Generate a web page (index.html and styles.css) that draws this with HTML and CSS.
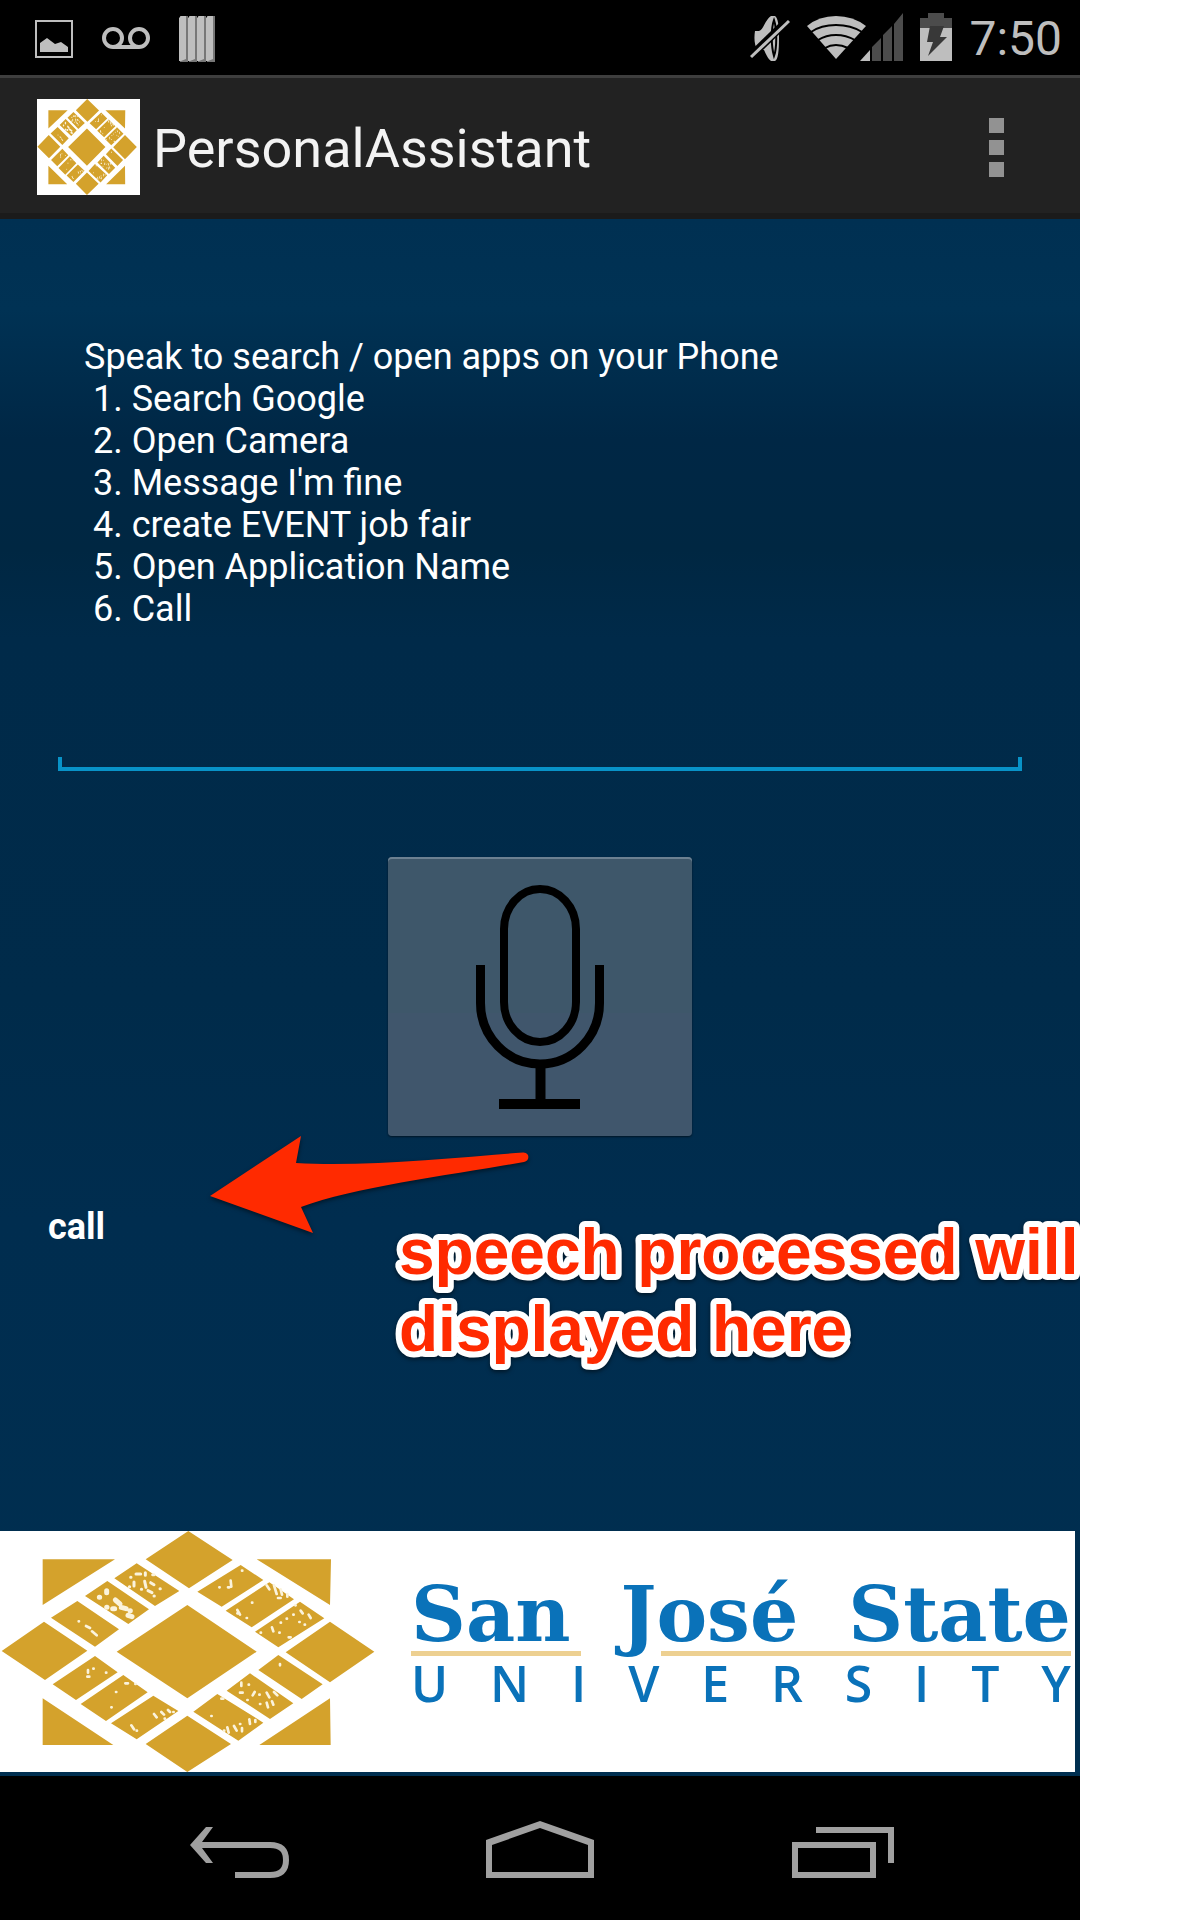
FILE: index.html
```html
<!DOCTYPE html>
<html lang="en">
<head>
<meta charset="utf-8">
<meta name="viewport" content="width=device-width, initial-scale=1">
<title>PersonalAssistant</title>
<link rel="stylesheet" href="styles.css">
</head>
<body>
<svg class="sprite" aria-hidden="true">
  <symbol id="emblem" viewBox="0 33 1125 723" preserveAspectRatio="none">
    <path fill="#d4a22c" d="M562 255 770 395 562 535 350 395ZM565 33 698 120 567 205 437 118ZM562 756 693 672 562 587 437 672ZM5 393 132 305 262 392 135 480ZM1123 395 990 305 857 397 990 487ZM128 118H345L128 255ZM770 118H993L990 255ZM128 535 340 675H128ZM990 535 992 675H778Z"/>
    <path fill="#d4a22c" d="M410 130 538 213 465 258 343 175ZM322 183 447 268 385 312 255 228ZM232 243 357 328 285 380 153 293ZM722 135 790 180 665 260 592 215ZM808 187 882 238 755 322 677 272ZM900 245 973 295 835 382 765 335ZM285 408 353 457 228 540 158 493ZM370 465 443 517 318 603 242 552ZM460 527 535 573 410 658 333 610ZM835 405 968 493 905 537 775 450ZM750 460 880 550 810 597 680 512ZM652 522 790 608 715 662 580 575Z"/>
    <path fill="none" stroke="#fbf3dc" stroke-width="9" stroke-linecap="round" d="M392 172h1M408 162h14M436 158v8M458 164h4M402 186v12M388 200h1M434 184l4 18M452 188l10 6M444 212l12 6M480 206h1M462 228h1M424 208h1"/>
    <path fill="none" stroke="#fbf3dc" stroke-width="15" stroke-linecap="round" d="M320 212v6M298 232h1M346 240l14 12M364 262l14 4M338 266h6M384 286l12 4M320 262h1M390 272h1"/>
    <path fill="none" stroke="#fbf3dc" stroke-width="8" stroke-linecap="round" d="M236 304h1M258 318l12 6M276 334l14 12M726 152h1M692 182l2 18M684 202h4M658 202h1M712 270l8 14M740 294h1M756 248h1M800 196l8 12M822 196l8 26M842 208l4 16M862 222v8M834 234h8M712 280h6M886 256h1M902 272l6 8M926 284l6 10M880 284h1M898 306h1M860 296h1M914 314h1M816 322l4 12M838 338h1M866 352h6M842 308h1M782 338h1"/>
    <path fill="none" stroke="#fbf3dc" stroke-width="8" stroke-linecap="round" d="M264 450v8M280 446h1M262 470h6M318 458h1M376 490h8M406 492h1M348 516h1M334 562h1M394 616l8 12M410 632h1M462 582l8 10M484 576l8 8M504 570l6 6M520 576h1M494 596h1M840 432v4M724 488v10M746 494h1M720 518h8M758 526l6-10M778 524h1M800 518l8 14M822 516l10 10M816 544l4 10M800 548l4 14M780 552h1M742 540h1M664 536h6M634 588h1M682 622l4 16M702 618l8 14M726 624v10M748 598l2 14M766 600v6M672 632h1M720 612h1"/>
  </symbol>
</svg>

<div class="phone">
  <div class="status-bar">
    <div class="status-group">
      <svg class="i-picture" viewBox="35 12 38 50" aria-hidden="true"><path fill="none" stroke="#bebebe" stroke-width="2" d="M36 20H72V56H36Z"/><path fill="#bebebe" d="M40 51V42L47 37 55 43 61 41 68 46V51Z"/></svg>
      <svg class="i-voicemail" viewBox="102 12 48 50" aria-hidden="true"><g fill="none" stroke="#bebebe" stroke-width="4"><circle cx="113" cy="37" r="9"/><circle cx="139" cy="37" r="9"/><path d="M113 46H139"/></g></svg>
      <svg class="i-stripes" viewBox="180 12 36 50" aria-hidden="true"><path fill="#777" d="M181 15h8v46h-8zM190 15h8v46h-8zM199 15h8v46h-8zM208 15h8v46h-8z"/><path fill="#bebebe" d="M182 15h5v43l-5 2h-2V17zM191 15h5v43l-5 2h-2V17zM200 15h5v43l-5 2h-2V17zM209 15h5v43l-5 2h-2V17z"/></svg>
    </div>
    <div class="status-group status-right">
      <svg class="i-mute" viewBox="746 12 40 50" aria-hidden="true"><path fill="#bebebe" d="M751 30h4c5-2 6-11 12-15h4c3 2 4 9 4 22s-1 22-4 23h-4c-3-2-5-7-7-11h-6c-4-4-4-13-3-19Z"/><path fill="none" stroke="#000" stroke-width="2" d="M770 19c-3 8-3 26 0 36 3-8 3-27 0-36Z"/><path stroke="#000" stroke-width="8" d="M746 56 784 19"/><path stroke="#bebebe" stroke-width="3" d="M747 56 785 20"/></svg>
      <svg class="i-network" viewBox="807 12 96 50" aria-hidden="true"><path fill="#bebebe" d="M836 58 807 25Q819 15 836 15T866 25Z"/><g fill="none" stroke="#000" stroke-width="2"><path d="M811 31Q821 24 836 24T862 31M818 39Q826 34 836 34T855 39M825 47Q830 44 836 44T848 47"/></g><path fill="#4c4c4c" d="M872 46 881 37V60H872ZM883 34 892 25V60H883ZM894 23 903 12V60H894Z"/><path fill="#bebebe" d="M860 60 870 49V60Z"/></svg>
      <svg class="i-battery" viewBox="919 12 32 50" aria-hidden="true"><path fill="#4c4c4c" d="M927 12h16v5h8v11h-32V17h8z"/><path fill="#bebebe" d="M919 27h32v33h-32z"/><path fill="#383838" d="M929 25h14l-4 11h7l-19 19 5-14h-6Z"/></svg>
      <time class="clock">7:50</time>
    </div>
  </div>

  <header class="action-bar">
    <span class="app-icon"><svg aria-hidden="true"><use href="#emblem"/></svg></span>
    <h1 class="app-title">PersonalAssistant</h1>
    <button class="overflow" type="button" aria-label="More options"><i></i><i></i><i></i></button>
  </header>

  <main class="screen">
    <section class="help">
      <p>Speak to search / open apps on your Phone</p>
      <ol>
        <li>1. Search Google</li>
        <li>2. Open Camera</li>
        <li>3. Message I'm fine</li>
        <li>4. create EVENT job fair</li>
        <li>5. Open Application Name</li>
        <li>6. Call</li>
      </ol>
    </section>

    <input class="query" type="text" aria-label="Query">

    <button class="mic" type="button" aria-label="Speak">
      <svg viewBox="0 0 304 279" aria-hidden="true"><g fill="none" stroke="#000"><rect x="116" y="32" width="72" height="153" rx="36" ry="40" stroke-width="8"/><path stroke-width="9" d="M92.500 108V146A59.500 61 0 0 0 211.500 146V108"/><path stroke-width="10" d="M152.500 207V247M111 247H192"/></g></svg>
    </button>

    <div class="result">
      <output>call</output>
      <svg class="arrow" viewBox="200 1126 340 120" aria-hidden="true"><path fill="#ff2a00" d="M210 1196 301 1136 296 1163C365 1167 450 1158 523 1152.500C530 1152 530 1161 524 1162C450 1175 355 1187 301 1207L313 1233Z"/></svg>
      <svg class="caption" viewBox="0 0 690 170"><text><tspan x="8" y="61">speech processed will</tspan><tspan x="8" y="138">displayed here</tspan></text></svg>
    </div>

    <div class="banner">
      <svg class="banner-emblem" aria-hidden="true"><use href="#emblem"/></svg>
      <div class="wordmark">
        <div class="wordmark-name"><span>San</span> <span>José</span> <span>State</span></div>
        <div class="wordmark-rule"><i></i><i></i></div>
        <div class="wordmark-sub"><span>U</span><span>N</span><span>I</span><span>V</span><span>E</span><span>R</span><span>S</span><span>I</span><span>T</span><span>Y</span></div>
      </div>
    </div>
  </main>

  <nav class="nav-bar">
    <button type="button" aria-label="Back"><svg viewBox="186 1818 108 60" aria-hidden="true"><path fill="#a0a0a0" d="M190 1845 206 1827H213L202 1842V1848L213 1863H206Z"/><path fill="none" stroke="#a0a0a0" stroke-width="6" d="M198 1845H270C281 1845 286 1850 286 1860S281 1875 270 1875H235"/></svg></button>
    <button type="button" aria-label="Home"><svg viewBox="486 1818 108 60" aria-hidden="true"><path fill="#a0a0a0" fill-rule="evenodd" d="M540 1821 594 1840V1878H486V1840ZM540 1828 492 1845V1872H588V1845Z"/></svg></button>
    <button type="button" aria-label="Recent apps"><svg viewBox="786 1818 108 60" aria-hidden="true"><path fill="none" stroke="#a0a0a0" stroke-width="6" d="M795 1845H873V1875H795ZM816 1830H891V1863"/></svg></button>
  </nav>
</div>
</body>
</html>
```
FILE: styles.css
```css
* { box-sizing: border-box; }

body {
  margin: 0;
  background: #fff;
  font-family: Roboto, "Liberation Sans", sans-serif;
}

h1, p, ol { margin: 0; padding: 0; }

button {
  border: 0;
  padding: 0;
  background: none;
  font: inherit;
}

svg { display: block; }

.sprite {
  position: absolute;
  width: 0;
  height: 0;
}

.phone {
  display: flex;
  flex-direction: column;
  max-width: 1080px;
  min-height: 100vh;
  background: #000;
}

/* System status bar */
.status-bar {
  display: flex;
  align-items: center;
  justify-content: space-between;
  height: 75px;
  padding: 0 18px 0 35px;
}

.status-group {
  display: flex;
  align-items: center;
  gap: 29px;
}

.status-right { gap: 17px; }
.status-group svg { height: 50px; }
.i-picture { width: 38px; }
.i-voicemail { width: 48px; }
.i-stripes { width: 36px; }
.i-mute { width: 40px; }
.i-network { width: 96px; }
.i-battery { width: 32px; }

.clock {
  padding-top: 3px;
  color: #bebebe;
  font-size: 48px;
  line-height: 56px;
}

/* App bar */
.action-bar {
  display: flex;
  align-items: center;
  padding: 21px 76px 18px 37px;
  border-top: 3px solid #3e3e3e;
  border-bottom: 6px solid #1b1b1b;
  background: #222;
}

.app-icon {
  padding-right: 3px;
  background: #fff;
}

.app-icon svg {
  width: 100px;
  height: 96px;
}

.app-title {
  flex: 1;
  padding: 4px 0 0 13px;
  color: #f3f3f3;
  font-size: 54px;
  font-weight: 400;
  line-height: 64px;
}

.overflow {
  display: grid;
  gap: 7px;
}

.overflow i {
  width: 15px;
  height: 15px;
  background: #929292;
}

/* Main screen */
.screen {
  display: flex;
  flex: 1;
  flex-direction: column;
  overflow: hidden;
  padding-top: 117px;
  background: linear-gradient(#003052 0, #003254 90px, #002745 220px, #002742 330px, #002a49 420px, #002b4a 780px, #002d4f 1000px, #002f50 100%);
}

.help {
  padding-left: 84px;
  color: #fff;
  font-size: 36px;
  line-height: 42px;
}

.help ol {
  padding-left: 9px;
  list-style: none;
}

.query {
  height: 84px;
  margin: 57px 58px 0;
  padding: 0 20px 8px;
  border: 0;
  outline: 0;
  background:
    linear-gradient(#0893c8, #0893c8) left bottom / 4px 14px no-repeat,
    linear-gradient(#0893c8, #0893c8) right bottom / 4px 14px no-repeat,
    linear-gradient(#0893c8, #0893c8) left bottom / 100% 4px no-repeat;
  color: #fff;
  font: inherit;
  font-size: 36px;
}

.mic {
  align-self: center;
  width: 304px;
  margin-top: 86px;
  border-radius: 4px;
  background: linear-gradient(#3e576a 56%, #40566c 56%);
  box-shadow: inset 0 2px 0 #6c8192, 0 1px 2px #001626;
}

.result {
  position: relative;
  margin-top: 70px;
  padding-left: 48px;
}

.result output {
  display: block;
  color: #fff;
  font-size: 36px;
  font-weight: 700;
  line-height: 42px;
}

.arrow {
  position: absolute;
  top: -80px;
  left: 200px;
  width: 340px;
  filter: drop-shadow(0 2px 2px rgba(0, 0, 0, 0.5));
}

.caption {
  position: absolute;
  top: 7px;
  left: 391px;
  width: 690px;
  fill: #ff2a00;
  stroke: #fff;
  stroke-width: 12px;
  stroke-linejoin: round;
  paint-order: stroke fill;
  font-family: "Liberation Sans", Arial, sans-serif;
  font-size: 64px;
  font-weight: 700;
  filter: drop-shadow(0 2px 2px rgba(0, 0, 0, 0.5));
}

/* University banner */
.banner {
  display: flex;
  margin: auto 5px 4px 0;
  background: #fff;
}

.banner-emblem {
  flex: none;
  width: 375px;
  height: 241px;
}

.wordmark {
  flex: 1;
  padding: 48px 4px 0 36px;
  color: #0a72b9;
}

.wordmark-name {
  display: flex;
  justify-content: space-between;
  font-family: "DejaVu Serif", serif;
  font-size: 76px;
  font-weight: 700;
  line-height: 72px;
}

.wordmark-rule {
  display: grid;
  grid-template-columns: 170px 1fr;
  gap: 80px;
}

.wordmark-rule i {
  height: 5px;
  background: #edd091;
}

.wordmark-sub {
  display: flex;
  justify-content: space-between;
  font-family: "Open Sans", sans-serif;
  font-size: 50px;
  font-weight: 600;
  line-height: 54px;
}

/* System navigation */
.nav-bar {
  display: flex;
  justify-content: center;
  height: 144px;
}

.nav-bar button {
  display: grid;
  flex: 0 1 300px;
  place-items: center;
}

.nav-bar svg {
  width: 108px;
  height: 60px;
}
```
